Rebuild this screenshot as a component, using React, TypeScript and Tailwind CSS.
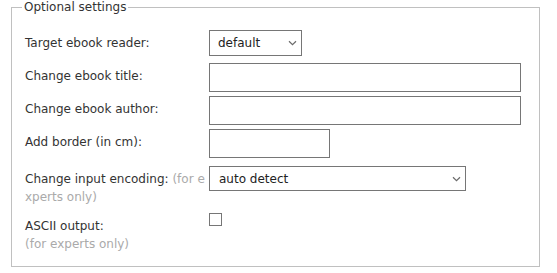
import React from 'react';

const Chevron: React.FC = () => (
  <svg
    width="9"
    height="6"
    viewBox="0 0 9 6"
    className="pointer-events-none absolute right-[5px] top-1/2 -translate-y-1/2"
  >
    <path d="M1 1.2 L4.5 4.6 L8 1.2" fill="none" stroke="#6b6b6b" strokeWidth="1.2" />
  </svg>
);

const Row: React.FC<{ label: React.ReactNode; className?: string; children: React.ReactNode }> = ({
  label,
  className = '',
  children,
}) => (
  <div className={`flex items-start ${className}`}>
    <div className="w-[184px] shrink-0 pt-[4px] leading-[18px] text-[#333]">{label}</div>
    {children}
  </div>
);

const App: React.FC = () => {
  return (
    <div className="w-[557px] h-[273px] bg-white font-['DejaVu_Sans',Verdana,sans-serif] text-[12px]">
      <fieldset className="ml-[11px] w-[529px] h-[267px] border border-[#c0c0c0] pl-[13px] pr-[13px]">
        <legend className="-ml-[3px] px-[2px] leading-[15px] text-[#333]">Optional settings</legend>

        <Row label="Target ebook reader:" className="mt-[15px]">
          <div className="relative">
            <select className="appearance-none w-[93px] h-[26px] border border-[#767676] bg-white pl-[8px] text-[#222] outline-none">
              <option>default</option>
            </select>
            <Chevron />
          </div>
        </Row>

        <Row label="Change ebook title:" className="mt-[7px]">
          <input type="text" className="w-[312px] h-[29px] border border-[#767676] bg-white outline-none" />
        </Row>

        <Row label="Change ebook author:" className="mt-[4px]">
          <input type="text" className="w-[312px] h-[29px] border border-[#767676] bg-white outline-none" />
        </Row>

        <Row label="Add border (in cm):" className="mt-[4px]">
          <input type="text" className="w-[121px] h-[29px] border border-[#767676] bg-white outline-none" />
        </Row>

        <Row
          className="mt-[8px]"
          label={
            <>
              Change input encoding: <span className="text-[#aaa]">(for e</span>
              <br />
              <span className="text-[#aaa]">xperts only)</span>
            </>
          }
        >
          <div className="relative">
            <select className="appearance-none w-[257px] h-[25px] border border-[#767676] bg-white pl-[9px] text-[#222] outline-none">
              <option>auto detect</option>
            </select>
            <Chevron />
          </div>
        </Row>

        <Row
          className="mt-[7px]"
          label={
            <>
              ASCII output:
              <br />
              <span className="text-[#aaa]">(for experts only)</span>
            </>
          }
        >
          <input
            type="checkbox"
            className="appearance-none mt-0 w-[13px] h-[13px] border border-[#767676] bg-white"
          />
        </Row>
      </fieldset>
    </div>
  );
};

export default App;
